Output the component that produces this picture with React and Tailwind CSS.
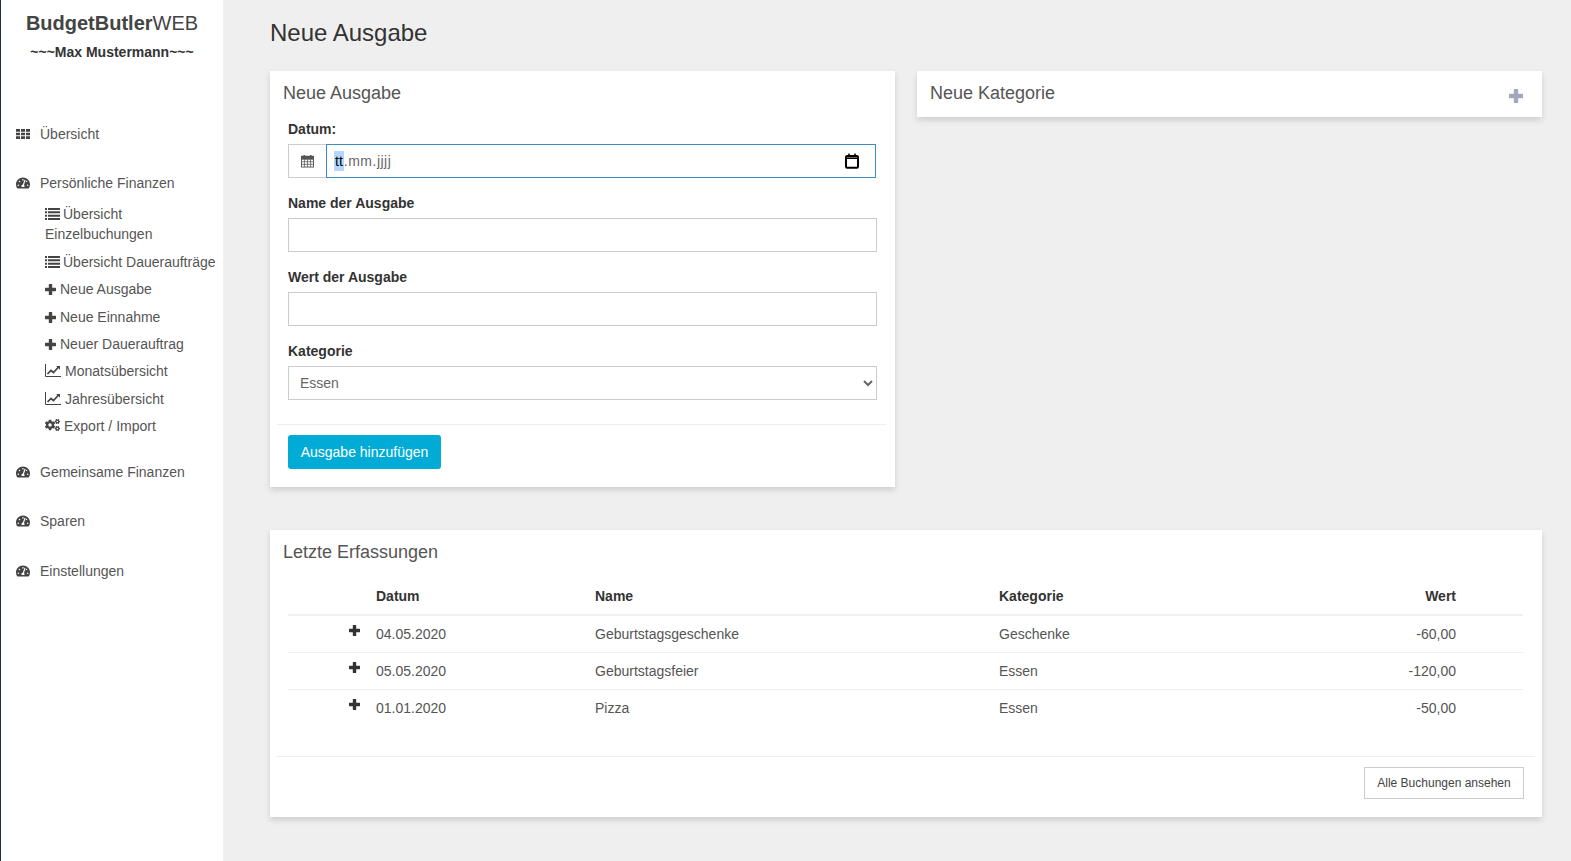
import { FaTachometerAlt, FaCogs } from "react-icons/fa";

// FontAwesome 4 shapes, react-icons only ships the newer ones
const ThIcon = ({ className = "" }) => (
  <svg viewBox="0 0 14 10" className={className} fill="currentColor">
    <path d="M0 0h4v2.7H0zM5 0h4v2.7H5zM10 0h4v2.7h-4zM0 3.65h4v2.7H0zM5 3.65h4v2.7H5zM10 3.65h4v2.7h-4zM0 7.3h4V10H0zM5 7.3h4V10H5zM10 7.3h4V10h-4z" />
  </svg>
);

const ListIcon = ({ className = "" }) => (
  <svg viewBox="0 0 15 12" className={className} fill="currentColor">
    <path d="M0 0h2v2H0zM3 0h12v2H3zM0 3.33h2v2H0zM3 3.33h12v2H3zM0 6.67h2v2H0zM3 6.67h12v2H3zM0 10h2v2H0zM3 10h12v2H3z" />
  </svg>
);

const PlusIcon = ({ className = "" }) => (
  <svg viewBox="0 0 11 11" className={className} fill="currentColor">
    <path d="M3.8 0.4q0-.4.4-.4h2.6q.4 0 .4.4v3.4h3.4q.4 0 .4.4v2.6q0 .4-.4.4H7.2v3.4q0 .4-.4.4H4.2q-.4 0-.4-.4V7.2H.4Q0 7.2 0 6.8V4.2q0-.4.4-.4h3.4z" />
  </svg>
);

const ChartIcon = ({ className = "" }) => (
  <svg viewBox="0 0 16 13" className={className} fill="none" stroke="currentColor">
    <path d="M0.5 0V12.5H16" strokeWidth="1" />
    <path d="M2.5 10L6 6.5L8.5 8.5L13.5 3" strokeWidth="1.7" />
    <path d="M11.2 2H15V5.8Z" fill="currentColor" stroke="none" />
  </svg>
);

const SUB_ITEMS = [
  { icon: ListIcon, cls: "w-[15px] h-[12px] mr-[3px]", label: "Übersicht Einzelbuchungen" },
  { icon: ListIcon, cls: "w-[15px] h-[12px] mr-[3px]", label: "Übersicht Daueraufträge" },
  { icon: PlusIcon, cls: "w-[11px] h-[11px] mr-[4px]", label: "Neue Ausgabe" },
  { icon: PlusIcon, cls: "w-[11px] h-[11px] mr-[4px]", label: "Neue Einnahme" },
  { icon: PlusIcon, cls: "w-[11px] h-[11px] mr-[4px]", label: "Neuer Dauerauftrag" },
  { icon: ChartIcon, cls: "w-[16px] h-[13px] mr-[4px]", label: "Monatsübersicht" },
  { icon: ChartIcon, cls: "w-[16px] h-[13px] mr-[4px]", label: "Jahresübersicht" },
  { icon: FaCogs, cls: "w-[15px] h-[14px] mr-[4px]", label: "Export / Import" },
];

const ROWS = [
  { datum: "04.05.2020", name: "Geburtstagsgeschenke", kategorie: "Geschenke", wert: "-60,00" },
  { datum: "05.05.2020", name: "Geburtstagsfeier", kategorie: "Essen", wert: "-120,00" },
  { datum: "01.01.2020", name: "Pizza", kategorie: "Essen", wert: "-50,00" },
];

const NavItem = ({ icon: Icon, iconClass = "h-[14px]", label, className = "" }) => (
  <div className={`flex items-center h-5 pl-[15px] text-[#555] ${className}`}>
    <Icon className={`w-[14px] shrink-0 text-[#444] ${iconClass}`} />
    <span className="ml-[10px]">{label}</span>
  </div>
);

const CalendarIcon = () => (
  <svg viewBox="0 0 14 14" className="w-[13px] h-[14px]" fill="none" stroke="#555" strokeWidth="1">
    <rect x="0.5" y="2" width="13" height="11.5" />
    <path d="M0.5 2H13.5V5H0.5Z" fill="#555" />
    <path d="M0.5 7.8H13.5M0.5 10.6H13.5M3.7 5V13.5M7 5V13.5M10.3 5V13.5" strokeWidth="0.8" />
    <path d="M3.5 0.5V3M10.5 0.5V3" strokeWidth="1.6" />
  </svg>
);

const Field = ({ label, children }) => (
  <div className="mt-[15px]">
    <label className="block font-bold text-[#333] leading-5 mb-[5px]">{label}</label>
    {children}
  </div>
);

const Card = ({ title, className = "", children }) => (
  <section className={`bg-white shadow-[0_3px_6px_rgba(0,0,0,0.14)] ${className}`}>
    <h2 className="pt-3 pl-[13px] text-[18px] leading-5 text-[#555]">{title}</h2>
    {children}
  </section>
);

export default function App() {
  return (
    <div
      className="flex min-h-screen bg-[#efefef] text-[14px] leading-5 text-[#555]"
      style={{ fontFamily: '"Liberation Sans", Arial, sans-serif' }}
    >
      <aside className="w-[223px] shrink-0 bg-white border-l border-[#222d3a]">
        <div className="pt-[11px] text-center">
          <div className="text-[20px] leading-6 text-[#444]">
            <b>BudgetButler</b>WEB
          </div>
          <div className="mt-[7px] font-bold text-[#333]">~~~Max Mustermann~~~</div>
        </div>
        <nav className="mt-[62px]">
          <NavItem icon={ThIcon} iconClass="h-[10px]" label="Übersicht" />
          <NavItem icon={FaTachometerAlt} label="Persönliche Finanzen" className="mt-[29px]" />
          <ul className="mt-[11.4px] pl-11">
            {SUB_ITEMS.map((item) => (
              <li key={item.label} className="mb-[7.4px] text-[#555]">
                <item.icon className={`inline-block align-[-1px] text-[#444] ${item.cls}`} />
                {item.label}
              </li>
            ))}
          </ul>
          <NavItem icon={FaTachometerAlt} label="Gemeinsame Finanzen" className="mt-[26.1px]" />
          <NavItem icon={FaTachometerAlt} label="Sparen" className="mt-[29px]" />
          <NavItem icon={FaTachometerAlt} label="Einstellungen" className="mt-[30px]" />
        </nav>
      </aside>

      <main className="flex-1 pl-[47px] pr-[29px] pt-5">
        <h1 className="text-[24px] leading-[26px] text-[#333] mb-[25px]">Neue Ausgabe</h1>

        <div className="flex items-start gap-[22px]">
          <Card title="Neue Ausgabe" className="w-[625px] pb-[18px]">
            <form className="px-[18px] pt-[1px]">
              <Field label="Datum:">
                <div className="flex h-[34px] w-[588px]">
                  <span className="flex items-center justify-center w-[38px] border border-r-0 border-[#ccc]">
                    <CalendarIcon />
                  </span>
                  <div className="flex flex-1 items-center justify-between pl-[7px] pr-[15px] border border-[#3c8dbc]">
                    <span className="tracking-[0.5px] text-[#666]">
                      <span className="bg-[#b4d7ff] text-black py-[2px] px-[1px] tracking-normal">tt</span>.mm.jjjj
                    </span>
                    <svg viewBox="0 0 16 16" className="w-4 h-4" fill="none" stroke="#000" strokeWidth="2">
                      <rect x="2" y="3" width="12" height="11.8" rx="1" />
                      <path d="M2 5.2H14" strokeWidth="1.6" />
                      <path d="M5 0.5V3M11 0.5V3" strokeWidth="1.5" />
                    </svg>
                  </div>
                </div>
              </Field>
              <Field label="Name der Ausgabe">
                <input type="text" className="block w-[589px] h-[34px] border border-[#ccc] px-3 outline-none" />
              </Field>
              <Field label="Wert der Ausgabe">
                <input type="text" className="block w-[589px] h-[34px] border border-[#ccc] px-3 outline-none" />
              </Field>
              <Field label="Kategorie">
                <select className="block w-[589px] h-[34px] border border-[#ccc] bg-white px-[7px] text-[#666] outline-none appearance-auto">
                  <option>Essen</option>
                  <option>Geschenke</option>
                </select>
              </Field>
            </form>
            <div className="ml-[7px] mr-[9px] mt-[24px] border-t border-[#eeeeee]" />
            <button
              type="button"
              className="block ml-[18px] mt-[10px] h-[34px] w-[153px] rounded-[3px] bg-[#00acd6] text-white"
            >
              Ausgabe hinzufügen
            </button>
          </Card>

          <section className="relative w-[625px] h-[46px] bg-white shadow-[0_3px_6px_rgba(0,0,0,0.14)]">
            <h2 className="pt-3 pl-[13px] text-[18px] leading-5 text-[#555]">Neue Kategorie</h2>
            <PlusIcon className="absolute right-[19px] top-[18px] w-[14px] h-[14px] text-[#a0a8be]" />
          </section>
        </div>

        <Card title="Letzte Erfassungen" className="mt-[43px] pb-[18px]">
          <div className="px-[18px] mt-4">
            <table className="w-[1235px] table-fixed border-collapse">
              <colgroup>
                <col className="w-[80px]" />
                <col className="w-[219px]" />
                <col className="w-[404px]" />
                <col className="w-[300px]" />
                <col className="w-[173px]" />
                <col className="w-[59px]" />
              </colgroup>
              <thead>
                <tr className="border-b-2 border-[#f0f0f0] text-[#333]">
                  <th />
                  <th className="p-2 text-left font-bold">Datum</th>
                  <th className="p-2 text-left font-bold">Name</th>
                  <th className="p-2 text-left font-bold">Kategorie</th>
                  <th className="p-2 text-right font-bold">Wert</th>
                  <th />
                </tr>
              </thead>
              <tbody>
                {ROWS.map((row) => (
                  <tr key={row.datum} className="border-b border-[#f0f0f0] last:border-b-0">
                    <td className="p-2 align-top">
                      <PlusIcon className="ml-auto mt-[1px] w-[11px] h-[11px] text-[#333]" />
                    </td>
                    <td className="p-2">{row.datum}</td>
                    <td className="p-2">{row.name}</td>
                    <td className="p-2">{row.kategorie}</td>
                    <td className="p-2 text-right">{row.wert}</td>
                    <td />
                  </tr>
                ))}
              </tbody>
            </table>
          </div>
          <div className="mx-[7px] mt-[30px] border-t border-[#eeeeee]" />
          <div className="flex justify-end pr-[18px] mt-[10px]">
            <button type="button" className="h-8 w-40 border border-[#ccc] bg-white text-[12px] text-[#444]">
              Alle Buchungen ansehen
            </button>
          </div>
        </Card>
      </main>
    </div>
  );
}
